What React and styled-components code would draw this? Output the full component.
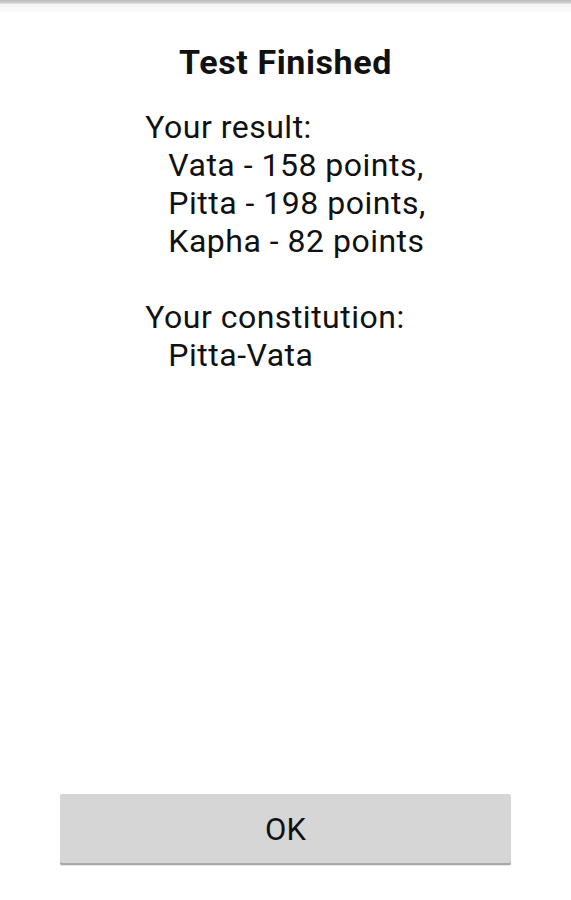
import React from "react";
import styled, { createGlobalStyle } from "styled-components";

const Global = createGlobalStyle`
  html, body { margin: 0; padding: 0; background: #fff; }
  body { font-family: Roboto, "Noto Sans", sans-serif; color: #000; }
`;

const Screen = styled.div`
  width: 571px;
  height: 900px;
  display: flex;
  flex-direction: column;
  background: #fff;
`;

const TopEdge = styled.div`
  height: 14px;
  flex: none;
  background: linear-gradient(to bottom, #bcbcbc 0px, #cfcfcf 3px, #f4f4f4 4px, #fbfbfb 10px, #ffffff 14px);
`;

const Title = styled.h1`
  margin: 28px 0 0;
  font-size: 34px;
  font-weight: 700;
  letter-spacing: 0.6px;
  text-align: center;
  line-height: 40px;
  color: #111;
`;

const Body = styled.div`
  display: flex;
  justify-content: center;
  margin-top: 26px;
  flex: 1;
`;

const Lines = styled.div`
  font-size: 32px;
  letter-spacing: 0.5px;
  line-height: 38px;
  color: #111;
  white-space: pre;
`;

const Line = styled.div`
  padding-left: ${(p) => (p.$indent ? "23px" : "0")};
  height: 38px;
`;

const Footer = styled.div`
  display: flex;
  justify-content: center;
  padding-bottom: 35px;
`;

const Button = styled.button`
  width: 451px;
  height: 71px;
  border: none;
  border-radius: 2px;
  background: #d6d6d6;
  box-shadow: inset 0 -2px 0 #a9a9a9, 0 1px 1px rgba(0,0,0,0.1);
  font-family: Roboto, "Noto Sans", sans-serif;
  font-size: 31px;
  color: #111;
  padding: 0;
`;

export default function App() {
  const lines = [
    { t: "Your result:" },
    { t: "Vata - 158 points,", i: true },
    { t: "Pitta - 198 points,", i: true },
    { t: "Kapha - 82 points", i: true },
    { t: "" },
    { t: "Your constitution:" },
    { t: "Pitta-Vata", i: true },
  ];
  return (
    <Screen>
      <Global />
      <TopEdge />
      <Title>Test Finished</Title>
      <Body>
        <Lines>
          {lines.map((l, k) => (
            <Line key={k} $indent={l.i}>{l.t}</Line>
          ))}
        </Lines>
      </Body>
      <Footer>
        <Button>OK</Button>
      </Footer>
    </Screen>
  );
}
